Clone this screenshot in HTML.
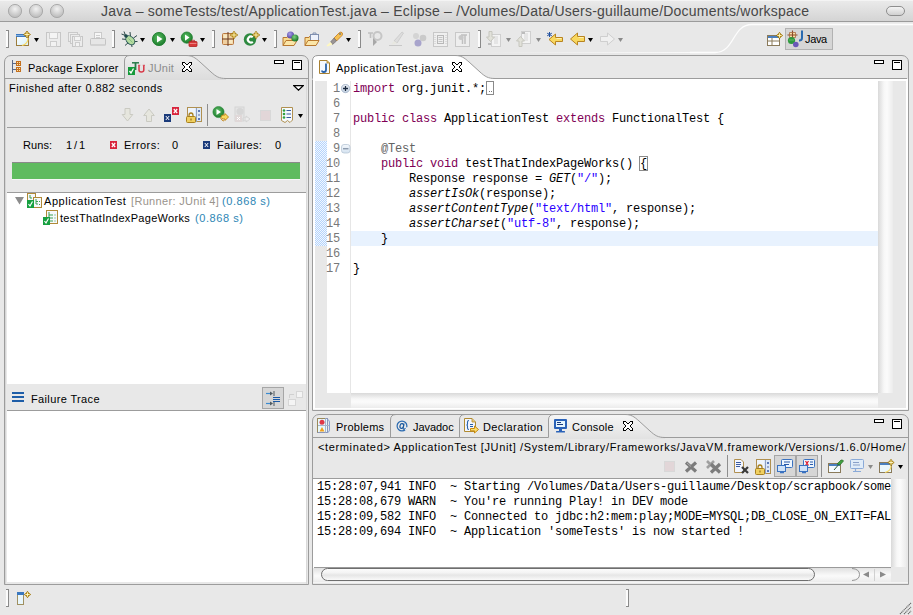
<!DOCTYPE html>
<html><head><meta charset="utf-8"><style>
html,body{margin:0;padding:0;width:913px;height:615px;overflow:hidden;background:#e8e8e8}
.t{position:absolute;white-space:nowrap;line-height:normal}
.b{position:absolute;display:block}
</style></head><body>
<div class="b" style="left:0px;top:0px;width:913px;height:21px;background:linear-gradient(#ebebeb,#d4d4d4)"></div>
<div class="b" style="left:0px;top:0px;width:913px;height:1px;background:#f4f4f4"></div>
<div class="b" style="left:0px;top:21px;width:913px;height:1px;background:#9b9b9b"></div>
<svg class="b" style="left:7px;top:3px" width="16" height="16" viewBox="0 0 16 16"><defs><radialGradient id="tl" cx="50%" cy="35%" r="60%"><stop offset="0" stop-color="#f2f2f2"/><stop offset="1" stop-color="#bdbdbd"/></radialGradient></defs><circle cx="8" cy="8" r="6.6" fill="url(#tl)" stroke="#a6a6a6" stroke-width="0.9"/></svg>
<svg class="b" style="left:28px;top:3px" width="16" height="16" viewBox="0 0 16 16"><defs><radialGradient id="tl" cx="50%" cy="35%" r="60%"><stop offset="0" stop-color="#f2f2f2"/><stop offset="1" stop-color="#bdbdbd"/></radialGradient></defs><circle cx="8" cy="8" r="6.6" fill="url(#tl)" stroke="#a6a6a6" stroke-width="0.9"/></svg>
<svg class="b" style="left:49px;top:3px" width="16" height="16" viewBox="0 0 16 16"><defs><radialGradient id="tl" cx="50%" cy="35%" r="60%"><stop offset="0" stop-color="#f2f2f2"/><stop offset="1" stop-color="#bdbdbd"/></radialGradient></defs><circle cx="8" cy="8" r="6.6" fill="url(#tl)" stroke="#a6a6a6" stroke-width="0.9"/></svg>
<span id="title" class="t" style="left:101px;top:3px;font-size:14px;color:#474747;letter-spacing:0.234px;font-family:'Liberation Sans', sans-serif;font-weight:normal;font-style:normal;">Java – someTests/test/ApplicationTest.java – Eclipse – /Volumes/Data/Users-guillaume/Documents/workspace</span>
<div class="b" style="left:886px;top:6px;width:19px;height:10px;border:1px solid #8e8e8e;border-radius:6px;background:linear-gradient(#f4f4f4,#d0d0d0);box-sizing:border-box"></div>
<div class="b" style="left:0px;top:22px;width:913px;height:593px;background:#e8e8e8"></div>
<svg class="b" style="left:6px;top:30px" width="3" height="18" viewBox="0 0 3 18"><rect x="0" y="0.5" width="2" height="17" fill="#fcfcfc"/><path d="M2.5,0V18M0,0.5H2.5M0,17.5H2.5" stroke="#8a8a8a"/></svg>
<svg class="b" style="left:112px;top:30px" width="3" height="18" viewBox="0 0 3 18"><rect x="0" y="0.5" width="2" height="17" fill="#fcfcfc"/><path d="M2.5,0V18M0,0.5H2.5M0,17.5H2.5" stroke="#8a8a8a"/></svg>
<svg class="b" style="left:212px;top:30px" width="3" height="18" viewBox="0 0 3 18"><rect x="0" y="0.5" width="2" height="17" fill="#fcfcfc"/><path d="M2.5,0V18M0,0.5H2.5M0,17.5H2.5" stroke="#8a8a8a"/></svg>
<svg class="b" style="left:274px;top:30px" width="3" height="18" viewBox="0 0 3 18"><rect x="0" y="0.5" width="2" height="17" fill="#fcfcfc"/><path d="M2.5,0V18M0,0.5H2.5M0,17.5H2.5" stroke="#8a8a8a"/></svg>
<svg class="b" style="left:358px;top:30px" width="3" height="18" viewBox="0 0 3 18"><rect x="0" y="0.5" width="2" height="17" fill="#fcfcfc"/><path d="M2.5,0V18M0,0.5H2.5M0,17.5H2.5" stroke="#8a8a8a"/></svg>
<svg class="b" style="left:478px;top:30px" width="3" height="18" viewBox="0 0 3 18"><rect x="0" y="0.5" width="2" height="17" fill="#fcfcfc"/><path d="M2.5,0V18M0,0.5H2.5M0,17.5H2.5" stroke="#8a8a8a"/></svg>
<svg class="b" style="left:15px;top:31px" width="17" height="16" viewBox="0 0 17 16"><defs><linearGradient id="nwb" x1="0" y1="0" x2="1" y2="1"><stop offset="0" stop-color="#ffffff"/><stop offset="1" stop-color="#d6f0fb"/></linearGradient></defs><rect x="1.5" y="3.5" width="12" height="11" fill="url(#nwb)" stroke="#9c7c3c"/><rect x="1" y="3" width="10" height="3" fill="#3c78c0"/><rect x="1" y="4" width="10" height="1" fill="#80b0e0"/><path d="M13,7 Q13,13 7,14.5" fill="none" stroke="#f8d860" stroke-width="1.2"/><path d="M12,0.0 Q13.120000000000001,2.38 15.5,3.5 Q13.120000000000001,4.62 12,7.0 Q10.879999999999999,4.62 8.5,3.5 Q10.879999999999999,2.38 12,0.0Z" fill="#b88a08" stroke="#9a7000" stroke-width="0.7"/><path d="M12,1.0V6.0M9.5,3.5H14.5" stroke="#fff8c8" stroke-width="0.9"/></svg>
<svg class="b" style="left:34px;top:38px" width="5" height="4" viewBox="0 0 5 4"><path d="M0,0H5L2.5,4Z" fill="#000"/></svg>
<svg class="b" style="left:46px;top:32px" width="15" height="15" viewBox="0 0 15 15"><rect x="0.5" y="0.5" width="14" height="14" fill="#ececec" stroke="#c6c6c6"/><rect x="3.5" y="0.5" width="8" height="6" fill="#f4f4f4" stroke="#cfcfcf"/><rect x="4.5" y="9.5" width="6" height="5" fill="#f2f2f2" stroke="#cdcdcd"/></svg>
<svg class="b" style="left:68px;top:32px" width="15" height="15" viewBox="0 0 15 15"><rect x="0.5" y="0.5" width="9" height="9" fill="#ececec" stroke="#cacaca"/><rect x="2.5" y="2.5" width="9" height="9" fill="#ececec" stroke="#cacaca"/><rect x="4.5" y="4.5" width="10" height="10" fill="#ececec" stroke="#c6c6c6"/><rect x="6.5" y="4.5" width="6" height="4" fill="#f4f4f4" stroke="#cfcfcf"/><rect x="7.5" y="10.5" width="4" height="4" fill="#f2f2f2" stroke="#cdcdcd"/></svg>
<svg class="b" style="left:90px;top:32px" width="16" height="15" viewBox="0 0 16 15"><rect x="4.5" y="0.5" width="7" height="8" fill="#f6f6f6" stroke="#cacaca"/><path d="M6,3.5H10M6,5.5H10" stroke="#cfcfcf"/><rect x="0.5" y="6.5" width="15" height="7" rx="1" fill="#e6e6e6" stroke="#c4c4c4"/><rect x="1" y="12" width="14" height="2" fill="#d2d2d2"/></svg>
<svg class="b" style="left:121px;top:31px" width="17" height="16" viewBox="0 0 17 16"><g stroke="#1a3838" stroke-width="0.9" fill="none"><path d="M4.5,4.5L3,0.5M4.5,4.5L0.5,3"/><path d="M6,8.5L1,8M8,11L4,14.5M9.5,5.5L9,1M12.5,7L16,4.5M12.5,10.5L16.5,10.5M10.5,13L11,16"/></g><ellipse cx="9.3" cy="9.3" rx="3.6" ry="5.2" transform="rotate(-45 9.3 9.3)" fill="#b4dca0" stroke="#2a5858" stroke-width="1"/><path d="M7.5,7.5L11.5,11.5" stroke="#78b078" stroke-width="0.7"/><circle cx="5" cy="5" r="1.8" fill="#1e4a4a"/></svg>
<svg class="b" style="left:140px;top:38px" width="5" height="4" viewBox="0 0 5 4"><path d="M0,0H5L2.5,4Z" fill="#000"/></svg>
<svg class="b" style="left:151px;top:31px" width="16" height="16" viewBox="0 0 16 16"><defs><radialGradient id="rg" cx="45%" cy="40%" r="60%"><stop offset="0" stop-color="#58c060"/><stop offset="1" stop-color="#1c7a2c"/></radialGradient></defs><circle cx="8" cy="8" r="6.6" fill="url(#rg)" stroke="#208030" stroke-width="0.9"/><path d="M6,4.5L11.5,8L6,11.5Z" fill="#fff"/></svg>
<svg class="b" style="left:170px;top:38px" width="5" height="4" viewBox="0 0 5 4"><path d="M0,0H5L2.5,4Z" fill="#000"/></svg>
<svg class="b" style="left:180px;top:31px" width="18" height="16" viewBox="0 0 18 16"><defs><radialGradient id="rg2" cx="45%" cy="40%" r="60%"><stop offset="0" stop-color="#58c060"/><stop offset="1" stop-color="#1c7a2c"/></radialGradient></defs><circle cx="6.8" cy="6.6" r="5.6" fill="url(#rg2)" stroke="#208030" stroke-width="0.8"/><path d="M5,3.5L9.5,6.6L5,9.7Z" fill="#fff"/><rect x="9" y="10.5" width="8" height="5" rx="0.8" fill="#d83a3a" stroke="#b02020" stroke-width="0.8"/><path d="M11.5,10.5V9.3H14.5V10.5" fill="none" stroke="#b02020" stroke-width="0.8"/><path d="M9.5,12.5H16.5" stroke="#f0a0a0" stroke-width="0.7"/></svg>
<svg class="b" style="left:200px;top:38px" width="5" height="4" viewBox="0 0 5 4"><path d="M0,0H5L2.5,4Z" fill="#000"/></svg>
<svg class="b" style="left:222px;top:31px" width="16" height="15" viewBox="0 0 16 15"><rect x="0.5" y="2.5" width="11" height="11" rx="1" fill="#f0d0a0" stroke="#b87840"/><rect x="1.5" y="3.5" width="4" height="4" fill="#f8e8c0"/><rect x="6.5" y="8.5" width="4" height="4" fill="#f8e8c0"/><path d="M6,1V15M0,8H12" stroke="#6a3a20" stroke-width="1"/><path d="M12,0.20000000000000018 Q13.216,2.784 15.8,4 Q13.216,5.216 12,7.8 Q10.784,5.216 8.2,4 Q10.784,2.784 12,0.20000000000000018Z" fill="#b88a08" stroke="#9a7000" stroke-width="0.7"/><path d="M12,1.2000000000000002V6.8M9.2,4H14.8" stroke="#fff8c8" stroke-width="0.9"/></svg>
<svg class="b" style="left:243px;top:31px" width="17" height="15" viewBox="0 0 17 15"><circle cx="7" cy="8.5" r="6.2" fill="#2e8a40"/><path d="M9.8,6.2 A3,3 0 1 0 9.8,10.8" fill="none" stroke="#fff" stroke-width="2.2"/><path d="M13,0.20000000000000018 Q14.216,2.784 16.8,4 Q14.216,5.216 13,7.8 Q11.784,5.216 9.2,4 Q11.784,2.784 13,0.20000000000000018Z" fill="#b88a08" stroke="#9a7000" stroke-width="0.7"/><path d="M13,1.2000000000000002V6.8M10.2,4H15.8" stroke="#fff8c8" stroke-width="0.9"/></svg>
<svg class="b" style="left:262px;top:38px" width="5" height="4" viewBox="0 0 5 4"><path d="M0,0H5L2.5,4Z" fill="#000"/></svg>
<svg class="b" style="left:282px;top:31px" width="18" height="16" viewBox="0 0 18 16"><defs><radialGradient id="ps" cx="40%" cy="35%" r="60%"><stop offset="0" stop-color="#a8a0e8"/><stop offset="1" stop-color="#5a4aa8"/></radialGradient><radialGradient id="gs" cx="40%" cy="35%" r="60%"><stop offset="0" stop-color="#80d080"/><stop offset="1" stop-color="#1e7a2e"/></radialGradient></defs><path d="M1,6.5H5L6,5H10V14.5H1Z" fill="#f8dc90" stroke="#b87830"/><path d="M1,14.5L4,9.5H15L12,14.5Z" fill="#fbe6a8" stroke="#b87830"/><circle cx="8.5" cy="4" r="3.5" fill="url(#ps)"/><circle cx="13" cy="7" r="3.5" fill="url(#gs)"/></svg>
<svg class="b" style="left:304px;top:31px" width="17" height="16" viewBox="0 0 17 16"><path d="M1,6.5H5L6,5H10V14.5H1Z" fill="#f8dc90" stroke="#b87830"/><rect x="6.5" y="3.5" width="8" height="6" fill="#eef2fb" stroke="#8090b0"/><path d="M9,3.5V2H12V3.5" fill="none" stroke="#8090b0"/><path d="M1,14.5L4,9.5H15L12,14.5Z" fill="#fbe6a8" stroke="#b87830"/></svg>
<svg class="b" style="left:326px;top:31px" width="18" height="16" viewBox="0 0 18 16"><path d="M8,7L13.5,1.5Q15,0.5 16.2,1.8Q17,3 16,4.5L10.5,10Z" fill="#f6c050" stroke="#c07820" stroke-width="0.8"/><path d="M8,7L10.5,10L6.5,13.5L4.5,11Z" fill="#9a9494" stroke="#6a6464" stroke-width="0.6"/><path d="M4.5,11L6.5,13.5L1.5,15.5L0.5,14.5Z" fill="#fff8c0"/><circle cx="14" cy="3" r="0.8" fill="#2050a0"/></svg>
<svg class="b" style="left:346px;top:38px" width="5" height="4" viewBox="0 0 5 4"><path d="M0,0H5L2.5,4Z" fill="#000"/></svg>
<svg class="b" style="left:367px;top:31px" width="17" height="16" viewBox="0 0 17 16"><path d="M1,2H6M3.5,2V7" stroke="#c0c0c0" stroke-width="1.6"/><circle cx="10.5" cy="5" r="4" fill="none" stroke="#c6c6c6" stroke-width="2"/><path d="M6,7L6,15L10,11Z" fill="#a8a8a8"/></svg>
<svg class="b" style="left:388px;top:31px" width="17" height="16" viewBox="0 0 17 16"><path d="M6,10L14,1L15.5,2L9,12Z" fill="#dedede" stroke="#c4c4c4" stroke-width="0.7"/><path d="M1,14.5H14" stroke="#c8c8c8"/><path d="M3,14L6,10L9,12Z" fill="#e8e8e0"/></svg>
<svg class="b" style="left:412px;top:32px" width="15" height="15" viewBox="0 0 15 15"><circle cx="4" cy="4" r="3" fill="#d4d4d4"/><circle cx="11" cy="6" r="3.3" fill="#cacaca"/><circle cx="6" cy="11" r="3.5" fill="#a8a4cc"/></svg>
<svg class="b" style="left:433px;top:32px" width="16" height="15" viewBox="0 0 16 15"><rect x="0.5" y="0.5" width="14" height="14" fill="#efefef" stroke="#c8c8c8"/><rect x="4.5" y="3.5" width="6" height="8" fill="none" stroke="#b8b8b8"/><path d="M5.5,5.5H9.5M5.5,7.5H9.5M5.5,9.5H9.5" stroke="#c4c4c4"/><path d="M2,3V12M13,3V12" stroke="#c8c8c8" stroke-dasharray="1 1"/></svg>
<svg class="b" style="left:455px;top:32px" width="16" height="15" viewBox="0 0 16 15"><rect x="0.5" y="0.5" width="14" height="14" fill="#eeeeee" stroke="#c8c8c8"/><path d="M6,3H12M7.5,3V12M10,3V12" stroke="#c0c0c0" stroke-width="1.5"/><circle cx="6" cy="5.5" r="2.5" fill="#c8c8c8"/></svg>
<svg class="b" style="left:486px;top:31px" width="16" height="16" viewBox="0 0 16 16"><rect x="5.5" y="3.5" width="9" height="12" fill="#f4f4f4" stroke="#cfcfcf"/><path d="M8,6H12M8,8H12M8,10H12M8,12H12" stroke="#d6d6d6"/><path d="M3,0.5H6V6H8.5L4.5,10.5L0.5,6H3Z" fill="#e2e2da" stroke="#c6c6be"/><rect x="2" y="12" width="3" height="2" fill="#bcbcbc"/></svg>
<svg class="b" style="left:506px;top:38px" width="5" height="4" viewBox="0 0 5 4"><path d="M0,0H5L2.5,4Z" fill="#8a8a8a"/></svg>
<svg class="b" style="left:516px;top:31px" width="16" height="16" viewBox="0 0 16 16"><rect x="5.5" y="0.5" width="9" height="12" fill="#f4f4f4" stroke="#cfcfcf"/><path d="M8,3H12M8,5H12M8,7H12M8,9H12" stroke="#d6d6d6"/><path d="M3,15.5H6V10H8.5L4.5,5.5L0.5,10H3Z" fill="#e2e2da" stroke="#c6c6be"/><rect x="6" y="1" width="3" height="2" fill="#bcbcbc"/></svg>
<svg class="b" style="left:536px;top:38px" width="5" height="4" viewBox="0 0 5 4"><path d="M0,0H5L2.5,4Z" fill="#8a8a8a"/></svg>
<svg class="b" style="left:546px;top:31px" width="18" height="15" viewBox="0 0 18 15"><path d="M16.5,6.5H9.5V3L3,8.5L9.5,14V10.5H16.5Z" fill="#f8d860" stroke="#b88420" stroke-width="1"/><path d="M10.5,7.5H15.5" stroke="#fff0b0"/><path d="M3.5,1V6M1.2,2.2L5.8,4.8M1.2,4.8L5.8,2.2" stroke="#2050a0" stroke-width="1"/></svg>
<svg class="b" style="left:569px;top:31px" width="16" height="15" viewBox="0 0 16 15"><path d="M15.5,5.5H8.5V2L1.5,8L8.5,14V10.5H15.5Z" fill="#f8d860" stroke="#b88420" stroke-width="1"/><path d="M9.5,6.5H14.5" stroke="#fff0b0"/></svg>
<svg class="b" style="left:588px;top:38px" width="5" height="4" viewBox="0 0 5 4"><path d="M0,0H5L2.5,4Z" fill="#000"/></svg>
<svg class="b" style="left:600px;top:31px" width="16" height="15" viewBox="0 0 16 15"><path d="M0.5,5.5H7.5V2L14.5,8L7.5,14V10.5H0.5Z" fill="#f0f0f0" stroke="#cfcfcf" stroke-width="1"/></svg>
<svg class="b" style="left:618px;top:38px" width="5" height="4" viewBox="0 0 5 4"><path d="M0,0H5L2.5,4Z" fill="#8a8a8a"/></svg>
<div class="b" style="left:480px;top:52px;width:230px;height:1px;background:linear-gradient(90deg,rgba(255,255,255,0),#fbfbfb)"></div>
<svg class="b" style="left:690px;top:20px" width="223" height="36" viewBox="0 0 223 36"><path d="M0,32.5 L25,32.5 C45,32.5 42,4.5 62,4.5 L223,4.5" fill="none" stroke="#fdfdfd" stroke-width="1.3"/></svg>
<svg class="b" style="left:767px;top:32px" width="16" height="15" viewBox="0 0 16 15"><rect x="0.5" y="3.5" width="12" height="10" fill="#fff" stroke="#8a7a5a"/><rect x="1" y="4" width="11" height="2" fill="#4a80c0"/><path d="M5,6V13M1,9H12" stroke="#8a7a5a"/><path d="M12.5,0.2999999999999998 Q13.524000000000001,2.476 15.7,3.5 Q13.524000000000001,4.524 12.5,6.7 Q11.475999999999999,4.524 9.3,3.5 Q11.475999999999999,2.476 12.5,0.2999999999999998Z" fill="#b88a08" stroke="#9a7000" stroke-width="0.7"/><path d="M12.5,1.2999999999999998V5.7M10.3,3.5H14.7" stroke="#fff8c8" stroke-width="0.9"/></svg>
<div class="b" style="left:785px;top:28px;width:48px;height:22px;box-sizing:border-box;border:1px solid #b2b2b2;background:#d6d6d6"></div>
<svg class="b" style="left:787px;top:30px" width="18" height="18" viewBox="0 0 18 18"><rect x="2.5" y="2.5" width="6" height="5" fill="#f8e0a8"/><path d="M5.5,0.5V10M0.5,5H10.5" stroke="#8a4a28" stroke-width="1.1"/><path d="M2.5,2.5H8.5V7.5H2.5Z" fill="none" stroke="#a86a40" stroke-width="0.8"/><circle cx="4.5" cy="10.5" r="3.6" fill="#2e9a3e"/><path d="M2,10H7" stroke="#70c070" stroke-width="0.8"/><circle cx="8.8" cy="14.5" r="2.8" fill="#6a58b8"/><path d="M15,0.5V8Q15,10.5 12,10.5" stroke="#2a6ab0" stroke-width="2" fill="none"/></svg>
<span id="javap" class="t" style="left:805px;top:33px;font-size:11px;color:#000;letter-spacing:-0.366px;font-family:'Liberation Sans', sans-serif;font-weight:normal;font-style:normal;">Java</span>
<div class="b" style="left:4px;top:55px;width:305px;height:530px;box-sizing:border-box;border:1px solid #9c9c9c;border-radius:7px 7px 0 0;background:#e8e8e8"></div>
<div class="b" style="left:5px;top:79px;width:1px;height:505px;background:#d6d6d6"></div>
<div class="b" style="left:306px;top:79px;width:1px;height:505px;background:#d9d9d9"></div>
<div class="b" style="left:5px;top:78px;width:120px;height:1px;background:#9c9c9c"></div>
<div class="b" style="left:226px;top:78px;width:82px;height:1px;background:#9c9c9c"></div>
<svg class="b" style="left:124px;top:55px" width="103" height="25" viewBox="0 0 103 25"><defs><linearGradient id="jt" x1="0" y1="0" x2="0" y2="1"><stop offset="0" stop-color="#ededed"/><stop offset="1" stop-color="#dcdcdc"/></linearGradient></defs><path d="M0.5,23.5 L0.5,6 Q0.5,0.5 6,0.5 L62,0.5 C68,0.5 71,2.5 76,7 L87,17 C92,21.5 95,23.5 102,23.5 L102,25 L0.5,25 Z" fill="url(#jt)"/><path d="M0.5,23.5 L0.5,6 Q0.5,0.5 6,0.5 L62,0.5 C68,0.5 71,2.5 76,7 L87,17 C92,21.5 95,23.5 102,23.5 L103,23.5" fill="none" stroke="#9c9c9c"/></svg>
<svg class="b" style="left:182px;top:62px" width="10" height="10" viewBox="0 0 10 10"><g shape-rendering="crispEdges"><rect x="0" y="0" width="1" height="1" fill="#000"/><rect x="1" y="0" width="1" height="1" fill="#000"/><rect x="2" y="0" width="1" height="1" fill="#000"/><rect x="7" y="0" width="1" height="1" fill="#000"/><rect x="8" y="0" width="1" height="1" fill="#000"/><rect x="9" y="0" width="1" height="1" fill="#000"/><rect x="0" y="1" width="1" height="1" fill="#000"/><rect x="1" y="1" width="1" height="1" fill="#fff"/><rect x="2" y="1" width="1" height="1" fill="#fff"/><rect x="3" y="1" width="1" height="1" fill="#000"/><rect x="6" y="1" width="1" height="1" fill="#000"/><rect x="7" y="1" width="1" height="1" fill="#fff"/><rect x="8" y="1" width="1" height="1" fill="#fff"/><rect x="9" y="1" width="1" height="1" fill="#000"/><rect x="0" y="2" width="1" height="1" fill="#000"/><rect x="1" y="2" width="1" height="1" fill="#fff"/><rect x="2" y="2" width="1" height="1" fill="#fff"/><rect x="3" y="2" width="1" height="1" fill="#fff"/><rect x="4" y="2" width="1" height="1" fill="#000"/><rect x="5" y="2" width="1" height="1" fill="#000"/><rect x="6" y="2" width="1" height="1" fill="#fff"/><rect x="7" y="2" width="1" height="1" fill="#fff"/><rect x="8" y="2" width="1" height="1" fill="#fff"/><rect x="9" y="2" width="1" height="1" fill="#000"/><rect x="1" y="3" width="1" height="1" fill="#000"/><rect x="2" y="3" width="1" height="1" fill="#fff"/><rect x="3" y="3" width="1" height="1" fill="#fff"/><rect x="4" y="3" width="1" height="1" fill="#fff"/><rect x="5" y="3" width="1" height="1" fill="#fff"/><rect x="6" y="3" width="1" height="1" fill="#fff"/><rect x="7" y="3" width="1" height="1" fill="#fff"/><rect x="8" y="3" width="1" height="1" fill="#000"/><rect x="2" y="4" width="1" height="1" fill="#000"/><rect x="3" y="4" width="1" height="1" fill="#fff"/><rect x="4" y="4" width="1" height="1" fill="#fff"/><rect x="5" y="4" width="1" height="1" fill="#fff"/><rect x="6" y="4" width="1" height="1" fill="#fff"/><rect x="7" y="4" width="1" height="1" fill="#000"/><rect x="2" y="5" width="1" height="1" fill="#000"/><rect x="3" y="5" width="1" height="1" fill="#fff"/><rect x="4" y="5" width="1" height="1" fill="#fff"/><rect x="5" y="5" width="1" height="1" fill="#fff"/><rect x="6" y="5" width="1" height="1" fill="#fff"/><rect x="7" y="5" width="1" height="1" fill="#000"/><rect x="1" y="6" width="1" height="1" fill="#000"/><rect x="2" y="6" width="1" height="1" fill="#fff"/><rect x="3" y="6" width="1" height="1" fill="#fff"/><rect x="4" y="6" width="1" height="1" fill="#fff"/><rect x="5" y="6" width="1" height="1" fill="#fff"/><rect x="6" y="6" width="1" height="1" fill="#fff"/><rect x="7" y="6" width="1" height="1" fill="#fff"/><rect x="8" y="6" width="1" height="1" fill="#000"/><rect x="0" y="7" width="1" height="1" fill="#000"/><rect x="1" y="7" width="1" height="1" fill="#fff"/><rect x="2" y="7" width="1" height="1" fill="#fff"/><rect x="3" y="7" width="1" height="1" fill="#fff"/><rect x="4" y="7" width="1" height="1" fill="#000"/><rect x="5" y="7" width="1" height="1" fill="#000"/><rect x="6" y="7" width="1" height="1" fill="#fff"/><rect x="7" y="7" width="1" height="1" fill="#fff"/><rect x="8" y="7" width="1" height="1" fill="#fff"/><rect x="9" y="7" width="1" height="1" fill="#000"/><rect x="0" y="8" width="1" height="1" fill="#000"/><rect x="1" y="8" width="1" height="1" fill="#fff"/><rect x="2" y="8" width="1" height="1" fill="#fff"/><rect x="3" y="8" width="1" height="1" fill="#000"/><rect x="6" y="8" width="1" height="1" fill="#000"/><rect x="7" y="8" width="1" height="1" fill="#fff"/><rect x="8" y="8" width="1" height="1" fill="#fff"/><rect x="9" y="8" width="1" height="1" fill="#000"/><rect x="0" y="9" width="1" height="1" fill="#000"/><rect x="1" y="9" width="1" height="1" fill="#000"/><rect x="2" y="9" width="1" height="1" fill="#000"/><rect x="7" y="9" width="1" height="1" fill="#000"/><rect x="8" y="9" width="1" height="1" fill="#000"/><rect x="9" y="9" width="1" height="1" fill="#000"/></g></svg>
<span id="pe" class="t" style="left:28px;top:62px;font-size:11px;color:#000;letter-spacing:0.247px;font-family:'Liberation Sans', sans-serif;font-weight:normal;font-style:normal;">Package Explorer</span>
<span id="ju" class="t" style="left:148px;top:62px;font-size:11px;color:#8c8c8c;letter-spacing:0.2px;font-family:'Liberation Sans', sans-serif;font-weight:normal;font-style:normal;">JUnit</span>
<div class="b" style="left:274px;top:60px;width:10px;height:4px;box-sizing:border-box;border:1px solid #000;background:#fff"></div>
<div class="b" style="left:292px;top:60px;width:10px;height:10px;box-sizing:border-box;border:1px solid #000;background:#fff"></div>
<div class="b" style="left:294px;top:62px;width:6px;height:1px;background:#000"></div>
<svg class="b" style="left:293px;top:85px" width="11" height="6" viewBox="0 0 11 6"><path d="M0.8,0.6H10.2L5.5,5.2Z" fill="#fff" stroke="#000" stroke-width="1.2" stroke-linejoin="miter"/></svg>
<span id="fin" class="t" style="left:9px;top:82px;font-size:11px;color:#000;letter-spacing:0.447px;font-family:'Liberation Sans', sans-serif;font-weight:normal;font-style:normal;">Finished after 0.882 seconds</span>
<div class="b" style="left:7px;top:127px;width:299px;height:1px;background:#a0a0a0"></div>
<span id="runs" class="t" style="left:23px;top:139px;font-size:11px;color:#000;letter-spacing:0.075px;font-family:'Liberation Sans', sans-serif;font-weight:normal;font-style:normal;">Runs:</span>
<span id="r11" class="t" style="left:66px;top:139px;font-size:11px;color:#000;letter-spacing:1.95px;font-family:'Liberation Sans', sans-serif;font-weight:normal;font-style:normal;">1/1</span>
<span id="err" class="t" style="left:124px;top:139px;font-size:11px;color:#000;letter-spacing:0.447px;font-family:'Liberation Sans', sans-serif;font-weight:normal;font-style:normal;">Errors:</span>
<span class="t" style="left:172px;top:139px;font-size:11px;color:#000;letter-spacing:0.45px;font-family:'Liberation Sans', sans-serif;font-weight:normal;font-style:normal;">0</span>
<span id="fail" class="t" style="left:217px;top:139px;font-size:11px;color:#000;letter-spacing:0.325px;font-family:'Liberation Sans', sans-serif;font-weight:normal;font-style:normal;">Failures:</span>
<span class="t" style="left:275px;top:139px;font-size:11px;color:#000;letter-spacing:0.45px;font-family:'Liberation Sans', sans-serif;font-weight:normal;font-style:normal;">0</span>
<div class="b" style="left:12px;top:162px;width:288px;height:17px;background:#5fbb5f;border-top:1px solid #8a8a8a;box-sizing:border-box"></div>
<div class="b" style="left:12px;top:179px;width:288px;height:1px;background:#f6f6f6"></div>
<div class="b" style="left:7px;top:192px;width:299px;height:1px;background:#9c9c9c"></div>
<div class="b" style="left:7px;top:193px;width:299px;height:191px;background:#fff"></div>
<span id="apt" class="t" style="left:44px;top:195px;font-size:11px;color:#000;letter-spacing:0.557px;font-family:'Liberation Sans', sans-serif;font-weight:normal;font-style:normal;">ApplicationTest</span>
<span id="runner" class="t" style="left:131px;top:195px;font-size:11px;color:#9a948c;letter-spacing:0.328px;font-family:'Liberation Sans', sans-serif;font-weight:normal;font-style:normal;">[Runner: JUnit 4]</span>
<span id="t1" class="t" style="left:222px;top:195px;font-size:11px;color:#2d86b5;letter-spacing:0.575px;font-family:'Liberation Sans', sans-serif;font-weight:normal;font-style:normal;">(0.868 s)</span>
<span id="tt" class="t" style="left:60px;top:212px;font-size:11px;color:#000;letter-spacing:0.307px;font-family:'Liberation Sans', sans-serif;font-weight:normal;font-style:normal;">testThatIndexPageWorks</span>
<span id="t2" class="t" style="left:195px;top:212px;font-size:11px;color:#2d86b5;letter-spacing:0.575px;font-family:'Liberation Sans', sans-serif;font-weight:normal;font-style:normal;">(0.868 s)</span>
<div class="b" style="left:7px;top:384px;width:299px;height:26px;background:#e8e8e8"></div>
<div class="b" style="left:7px;top:410px;width:299px;height:1px;background:#9c9c9c"></div>
<div class="b" style="left:7px;top:411px;width:299px;height:171px;background:#fff"></div>
<span id="ft" class="t" style="left:31px;top:393px;font-size:11px;color:#000;letter-spacing:0.364px;font-family:'Liberation Sans', sans-serif;font-weight:normal;font-style:normal;">Failure Trace</span>
<div class="b" style="left:312px;top:55px;width:597px;height:356px;box-sizing:border-box;border:1px solid #9c9c9c;border-radius:7px 7px 0 0;background:#e8e8e8"></div>
<div class="b" style="left:313px;top:78px;width:0px;height:0px;"></div>
<div class="b" style="left:313px;top:78px;width:594px;height:1px;background:#9c9c9c"></div>
<svg class="b" style="left:312px;top:55px" width="184" height="25" viewBox="0 0 184 25"><path d="M0.5,23.5 L0.5,6 Q0.5,0.5 6,0.5 L143,0.5 C149,0.5 152,2.5 157,7 L168,17 C173,21.5 176,23.5 183,23.5 L183,25 L0.5,25 Z" fill="#fff"/><path d="M0.5,23.5 L0.5,6 Q0.5,0.5 6,0.5 L143,0.5 C149,0.5 152,2.5 157,7 L168,17 C173,21.5 176,23.5 183,23.5 L184,23.5" fill="none" stroke="#9c9c9c"/></svg>
<svg class="b" style="left:452px;top:62px" width="10" height="10" viewBox="0 0 10 10"><g shape-rendering="crispEdges"><rect x="0" y="0" width="1" height="1" fill="#000"/><rect x="1" y="0" width="1" height="1" fill="#000"/><rect x="2" y="0" width="1" height="1" fill="#000"/><rect x="7" y="0" width="1" height="1" fill="#000"/><rect x="8" y="0" width="1" height="1" fill="#000"/><rect x="9" y="0" width="1" height="1" fill="#000"/><rect x="0" y="1" width="1" height="1" fill="#000"/><rect x="1" y="1" width="1" height="1" fill="#fff"/><rect x="2" y="1" width="1" height="1" fill="#fff"/><rect x="3" y="1" width="1" height="1" fill="#000"/><rect x="6" y="1" width="1" height="1" fill="#000"/><rect x="7" y="1" width="1" height="1" fill="#fff"/><rect x="8" y="1" width="1" height="1" fill="#fff"/><rect x="9" y="1" width="1" height="1" fill="#000"/><rect x="0" y="2" width="1" height="1" fill="#000"/><rect x="1" y="2" width="1" height="1" fill="#fff"/><rect x="2" y="2" width="1" height="1" fill="#fff"/><rect x="3" y="2" width="1" height="1" fill="#fff"/><rect x="4" y="2" width="1" height="1" fill="#000"/><rect x="5" y="2" width="1" height="1" fill="#000"/><rect x="6" y="2" width="1" height="1" fill="#fff"/><rect x="7" y="2" width="1" height="1" fill="#fff"/><rect x="8" y="2" width="1" height="1" fill="#fff"/><rect x="9" y="2" width="1" height="1" fill="#000"/><rect x="1" y="3" width="1" height="1" fill="#000"/><rect x="2" y="3" width="1" height="1" fill="#fff"/><rect x="3" y="3" width="1" height="1" fill="#fff"/><rect x="4" y="3" width="1" height="1" fill="#fff"/><rect x="5" y="3" width="1" height="1" fill="#fff"/><rect x="6" y="3" width="1" height="1" fill="#fff"/><rect x="7" y="3" width="1" height="1" fill="#fff"/><rect x="8" y="3" width="1" height="1" fill="#000"/><rect x="2" y="4" width="1" height="1" fill="#000"/><rect x="3" y="4" width="1" height="1" fill="#fff"/><rect x="4" y="4" width="1" height="1" fill="#fff"/><rect x="5" y="4" width="1" height="1" fill="#fff"/><rect x="6" y="4" width="1" height="1" fill="#fff"/><rect x="7" y="4" width="1" height="1" fill="#000"/><rect x="2" y="5" width="1" height="1" fill="#000"/><rect x="3" y="5" width="1" height="1" fill="#fff"/><rect x="4" y="5" width="1" height="1" fill="#fff"/><rect x="5" y="5" width="1" height="1" fill="#fff"/><rect x="6" y="5" width="1" height="1" fill="#fff"/><rect x="7" y="5" width="1" height="1" fill="#000"/><rect x="1" y="6" width="1" height="1" fill="#000"/><rect x="2" y="6" width="1" height="1" fill="#fff"/><rect x="3" y="6" width="1" height="1" fill="#fff"/><rect x="4" y="6" width="1" height="1" fill="#fff"/><rect x="5" y="6" width="1" height="1" fill="#fff"/><rect x="6" y="6" width="1" height="1" fill="#fff"/><rect x="7" y="6" width="1" height="1" fill="#fff"/><rect x="8" y="6" width="1" height="1" fill="#000"/><rect x="0" y="7" width="1" height="1" fill="#000"/><rect x="1" y="7" width="1" height="1" fill="#fff"/><rect x="2" y="7" width="1" height="1" fill="#fff"/><rect x="3" y="7" width="1" height="1" fill="#fff"/><rect x="4" y="7" width="1" height="1" fill="#000"/><rect x="5" y="7" width="1" height="1" fill="#000"/><rect x="6" y="7" width="1" height="1" fill="#fff"/><rect x="7" y="7" width="1" height="1" fill="#fff"/><rect x="8" y="7" width="1" height="1" fill="#fff"/><rect x="9" y="7" width="1" height="1" fill="#000"/><rect x="0" y="8" width="1" height="1" fill="#000"/><rect x="1" y="8" width="1" height="1" fill="#fff"/><rect x="2" y="8" width="1" height="1" fill="#fff"/><rect x="3" y="8" width="1" height="1" fill="#000"/><rect x="6" y="8" width="1" height="1" fill="#000"/><rect x="7" y="8" width="1" height="1" fill="#fff"/><rect x="8" y="8" width="1" height="1" fill="#fff"/><rect x="9" y="8" width="1" height="1" fill="#000"/><rect x="0" y="9" width="1" height="1" fill="#000"/><rect x="1" y="9" width="1" height="1" fill="#000"/><rect x="2" y="9" width="1" height="1" fill="#000"/><rect x="7" y="9" width="1" height="1" fill="#000"/><rect x="8" y="9" width="1" height="1" fill="#000"/><rect x="9" y="9" width="1" height="1" fill="#000"/></g></svg>
<span id="edtab" class="t" style="left:336px;top:62px;font-size:11px;color:#000;letter-spacing:0.53px;font-family:'Liberation Sans', sans-serif;font-weight:normal;font-style:normal;">ApplicationTest.java</span>
<div class="b" style="left:874px;top:60px;width:10px;height:4px;box-sizing:border-box;border:1px solid #000;background:#fff"></div>
<div class="b" style="left:892px;top:60px;width:10px;height:10px;box-sizing:border-box;border:1px solid #000;background:#fff"></div>
<div class="b" style="left:894px;top:62px;width:6px;height:1px;background:#000"></div>
<div class="b" style="left:313px;top:79px;width:595px;height:331px;background:#fff"></div>
<div class="b" style="left:315px;top:81px;width:12px;height:327px;background:#e8e8e8"></div>
<div class="b" style="left:350px;top:81px;width:1px;height:312px;background:#e6e6e6"></div>
<div class="b" style="left:315px;top:141px;width:12px;height:105px;background-color:#f2f7ff;background-image:repeating-conic-gradient(#b4d4fc 0 25%,#f2f7ff 0 50%);background-size:2px 2px"></div>
<div class="b" style="left:351px;top:231px;width:527px;height:15px;background:#e8f2fe"></div>
<span class="t" style="left:333px;top:82px;font-size:12px;color:#787878;letter-spacing:-0.2px;font-family:'Liberation Mono', monospace;font-weight:normal;font-style:normal;">1</span>
<span class="t" style="left:353px;top:82px;font-size:12px;color:#000;letter-spacing:-0.2px;font-family:'Liberation Mono', monospace;font-weight:normal;font-style:normal;white-space:pre"><span style="color:#7f0055">import</span> org.junit.*;</span>
<span class="t" style="left:333px;top:97px;font-size:12px;color:#787878;letter-spacing:-0.2px;font-family:'Liberation Mono', monospace;font-weight:normal;font-style:normal;">6</span>
<span class="t" style="left:333px;top:112px;font-size:12px;color:#787878;letter-spacing:-0.2px;font-family:'Liberation Mono', monospace;font-weight:normal;font-style:normal;">7</span>
<span class="t" style="left:353px;top:112px;font-size:12px;color:#000;letter-spacing:-0.2px;font-family:'Liberation Mono', monospace;font-weight:normal;font-style:normal;white-space:pre"><span style="color:#7f0055">public</span> <span style="color:#7f0055">class</span> ApplicationTest <span style="color:#7f0055">extends</span> FunctionalTest {</span>
<span class="t" style="left:333px;top:127px;font-size:12px;color:#787878;letter-spacing:-0.2px;font-family:'Liberation Mono', monospace;font-weight:normal;font-style:normal;">8</span>
<span class="t" style="left:333px;top:142px;font-size:12px;color:#787878;letter-spacing:-0.2px;font-family:'Liberation Mono', monospace;font-weight:normal;font-style:normal;">9</span>
<span class="t" style="left:353px;top:142px;font-size:12px;color:#000;letter-spacing:-0.2px;font-family:'Liberation Mono', monospace;font-weight:normal;font-style:normal;white-space:pre">    <span style="color:#646464">@Test</span></span>
<span class="t" style="left:326px;top:157px;font-size:12px;color:#787878;letter-spacing:-0.2px;font-family:'Liberation Mono', monospace;font-weight:normal;font-style:normal;">10</span>
<span class="t" style="left:353px;top:157px;font-size:12px;color:#000;letter-spacing:-0.2px;font-family:'Liberation Mono', monospace;font-weight:normal;font-style:normal;white-space:pre">    <span style="color:#7f0055">public</span> <span style="color:#7f0055">void</span> testThatIndexPageWorks() {</span>
<span class="t" style="left:326px;top:172px;font-size:12px;color:#787878;letter-spacing:-0.2px;font-family:'Liberation Mono', monospace;font-weight:normal;font-style:normal;">11</span>
<span class="t" style="left:353px;top:172px;font-size:12px;color:#000;letter-spacing:-0.2px;font-family:'Liberation Mono', monospace;font-weight:normal;font-style:normal;white-space:pre">        Response response = <i>GET</i>(<span style="color:#2a00ff">"/"</span>);</span>
<span class="t" style="left:326px;top:187px;font-size:12px;color:#787878;letter-spacing:-0.2px;font-family:'Liberation Mono', monospace;font-weight:normal;font-style:normal;">12</span>
<span class="t" style="left:353px;top:187px;font-size:12px;color:#000;letter-spacing:-0.2px;font-family:'Liberation Mono', monospace;font-weight:normal;font-style:normal;white-space:pre">        <i>assertIsOk</i>(response);</span>
<span class="t" style="left:326px;top:202px;font-size:12px;color:#787878;letter-spacing:-0.2px;font-family:'Liberation Mono', monospace;font-weight:normal;font-style:normal;">13</span>
<span class="t" style="left:353px;top:202px;font-size:12px;color:#000;letter-spacing:-0.2px;font-family:'Liberation Mono', monospace;font-weight:normal;font-style:normal;white-space:pre">        <i>assertContentType</i>(<span style="color:#2a00ff">"text/html"</span>, response);</span>
<span class="t" style="left:326px;top:217px;font-size:12px;color:#787878;letter-spacing:-0.2px;font-family:'Liberation Mono', monospace;font-weight:normal;font-style:normal;">14</span>
<span class="t" style="left:353px;top:217px;font-size:12px;color:#000;letter-spacing:-0.2px;font-family:'Liberation Mono', monospace;font-weight:normal;font-style:normal;white-space:pre">        <i>assertCharset</i>(<span style="color:#2a00ff">"utf-8"</span>, response);</span>
<span class="t" style="left:326px;top:232px;font-size:12px;color:#787878;letter-spacing:-0.2px;font-family:'Liberation Mono', monospace;font-weight:normal;font-style:normal;">15</span>
<span class="t" style="left:353px;top:232px;font-size:12px;color:#000;letter-spacing:-0.2px;font-family:'Liberation Mono', monospace;font-weight:normal;font-style:normal;white-space:pre">    }</span>
<span class="t" style="left:326px;top:247px;font-size:12px;color:#787878;letter-spacing:-0.2px;font-family:'Liberation Mono', monospace;font-weight:normal;font-style:normal;">16</span>
<span class="t" style="left:326px;top:262px;font-size:12px;color:#787878;letter-spacing:-0.2px;font-family:'Liberation Mono', monospace;font-weight:normal;font-style:normal;">17</span>
<span class="t" style="left:353px;top:262px;font-size:12px;color:#000;letter-spacing:-0.2px;font-family:'Liberation Mono', monospace;font-weight:normal;font-style:normal;white-space:pre">}</span>
<div class="b" style="left:486px;top:81px;width:8px;height:14px;box-sizing:border-box;border:1px solid #8a8a8a;background:#fff"></div>
<div class="b" style="left:489px;top:91px;width:1px;height:1px;background:#777"></div>
<div class="b" style="left:491px;top:91px;width:1px;height:1px;background:#777"></div>
<div class="b" style="left:639px;top:156px;width:9px;height:15px;box-sizing:border-box;border:1px solid #8a8a8a"></div>
<svg class="b" style="left:341px;top:84px" width="10" height="10" viewBox="0 0 10 10"><defs><radialGradient id="fg" cx="50%" cy="40%" r="60%"><stop offset="0" stop-color="#ffffff"/><stop offset="1" stop-color="#b8c8dc"/></radialGradient></defs><circle cx="4.5" cy="4.5" r="4.2" fill="url(#fg)" stroke="#9aaac0" stroke-width="0.6"/><path d="M2,4.5H7M4.5,2V7" stroke="#1a2a40" stroke-width="1.3"/></svg>
<svg class="b" style="left:341px;top:144px" width="10" height="10" viewBox="0 0 10 10"><defs><linearGradient id="fm" x1="0" y1="0" x2="0" y2="1"><stop offset="0" stop-color="#f4f8fc"/><stop offset="1" stop-color="#d4e2f0"/></linearGradient></defs><rect x="0.5" y="0.5" width="8.5" height="8.5" rx="2.5" fill="url(#fm)" stroke="#b8c6d6" stroke-width="0.8"/><path d="M2,4.8H7.5" stroke="#6a7a90" stroke-width="1"/></svg>
<div class="b" style="left:878px;top:81px;width:15px;height:312px;background:linear-gradient(90deg,#d9d9d9,#f7f7f7 40%,#fbfbfb 60%,#ececec)"></div>
<div class="b" style="left:893px;top:81px;width:13px;height:327px;background:#e8e8e8"></div>
<div class="b" style="left:351px;top:393px;width:527px;height:15px;background:linear-gradient(#d9d9d9,#f7f7f7 40%,#fbfbfb 60%,#ececec)"></div>
<div class="b" style="left:327px;top:393px;width:24px;height:15px;background:#e8e8e8"></div>
<div class="b" style="left:878px;top:393px;width:15px;height:15px;background:#e8e8e8"></div>
<div class="b" style="left:313px;top:409px;width:595px;height:1px;background:#f4f4f4"></div>
<div class="b" style="left:312px;top:414px;width:597px;height:171px;box-sizing:border-box;border:1px solid #9c9c9c;border-radius:7px 7px 0 0;background:#e8e8e8"></div>
<div class="b" style="left:313px;top:437px;width:595px;height:1px;background:#9c9c9c"></div>
<svg class="b" style="left:390px;top:414px" width="8" height="24" viewBox="0 0 8 24"><path d="M0.5,23 L0.5,6 Q0.5,0.5 6,0.5" fill="none" stroke="#9c9c9c"/></svg>
<svg class="b" style="left:459px;top:414px" width="8" height="24" viewBox="0 0 8 24"><path d="M0.5,23 L0.5,6 Q0.5,0.5 6,0.5" fill="none" stroke="#9c9c9c"/></svg>
<svg class="b" style="left:548px;top:414px" width="118" height="25" viewBox="0 0 118 25"><defs><linearGradient id="ct" x1="0" y1="0" x2="0" y2="1"><stop offset="0" stop-color="#f6f6f6"/><stop offset="1" stop-color="#e2e2e2"/></linearGradient></defs><path d="M0.5,23.5 L0.5,6 Q0.5,0.5 6,0.5 L77,0.5 C83,0.5 86,2.5 91,7 L102,17 C107,21.5 110,23.5 117,23.5 L117,25 L0.5,25 Z" fill="url(#ct)"/><path d="M0.5,23.5 L0.5,6 Q0.5,0.5 6,0.5 L77,0.5 C83,0.5 86,2.5 91,7 L102,17 C107,21.5 110,23.5 117,23.5 L118,23.5" fill="none" stroke="#9c9c9c"/></svg>
<svg class="b" style="left:623px;top:421px" width="10" height="10" viewBox="0 0 10 10"><g shape-rendering="crispEdges"><rect x="0" y="0" width="1" height="1" fill="#000"/><rect x="1" y="0" width="1" height="1" fill="#000"/><rect x="2" y="0" width="1" height="1" fill="#000"/><rect x="7" y="0" width="1" height="1" fill="#000"/><rect x="8" y="0" width="1" height="1" fill="#000"/><rect x="9" y="0" width="1" height="1" fill="#000"/><rect x="0" y="1" width="1" height="1" fill="#000"/><rect x="1" y="1" width="1" height="1" fill="#fff"/><rect x="2" y="1" width="1" height="1" fill="#fff"/><rect x="3" y="1" width="1" height="1" fill="#000"/><rect x="6" y="1" width="1" height="1" fill="#000"/><rect x="7" y="1" width="1" height="1" fill="#fff"/><rect x="8" y="1" width="1" height="1" fill="#fff"/><rect x="9" y="1" width="1" height="1" fill="#000"/><rect x="0" y="2" width="1" height="1" fill="#000"/><rect x="1" y="2" width="1" height="1" fill="#fff"/><rect x="2" y="2" width="1" height="1" fill="#fff"/><rect x="3" y="2" width="1" height="1" fill="#fff"/><rect x="4" y="2" width="1" height="1" fill="#000"/><rect x="5" y="2" width="1" height="1" fill="#000"/><rect x="6" y="2" width="1" height="1" fill="#fff"/><rect x="7" y="2" width="1" height="1" fill="#fff"/><rect x="8" y="2" width="1" height="1" fill="#fff"/><rect x="9" y="2" width="1" height="1" fill="#000"/><rect x="1" y="3" width="1" height="1" fill="#000"/><rect x="2" y="3" width="1" height="1" fill="#fff"/><rect x="3" y="3" width="1" height="1" fill="#fff"/><rect x="4" y="3" width="1" height="1" fill="#fff"/><rect x="5" y="3" width="1" height="1" fill="#fff"/><rect x="6" y="3" width="1" height="1" fill="#fff"/><rect x="7" y="3" width="1" height="1" fill="#fff"/><rect x="8" y="3" width="1" height="1" fill="#000"/><rect x="2" y="4" width="1" height="1" fill="#000"/><rect x="3" y="4" width="1" height="1" fill="#fff"/><rect x="4" y="4" width="1" height="1" fill="#fff"/><rect x="5" y="4" width="1" height="1" fill="#fff"/><rect x="6" y="4" width="1" height="1" fill="#fff"/><rect x="7" y="4" width="1" height="1" fill="#000"/><rect x="2" y="5" width="1" height="1" fill="#000"/><rect x="3" y="5" width="1" height="1" fill="#fff"/><rect x="4" y="5" width="1" height="1" fill="#fff"/><rect x="5" y="5" width="1" height="1" fill="#fff"/><rect x="6" y="5" width="1" height="1" fill="#fff"/><rect x="7" y="5" width="1" height="1" fill="#000"/><rect x="1" y="6" width="1" height="1" fill="#000"/><rect x="2" y="6" width="1" height="1" fill="#fff"/><rect x="3" y="6" width="1" height="1" fill="#fff"/><rect x="4" y="6" width="1" height="1" fill="#fff"/><rect x="5" y="6" width="1" height="1" fill="#fff"/><rect x="6" y="6" width="1" height="1" fill="#fff"/><rect x="7" y="6" width="1" height="1" fill="#fff"/><rect x="8" y="6" width="1" height="1" fill="#000"/><rect x="0" y="7" width="1" height="1" fill="#000"/><rect x="1" y="7" width="1" height="1" fill="#fff"/><rect x="2" y="7" width="1" height="1" fill="#fff"/><rect x="3" y="7" width="1" height="1" fill="#fff"/><rect x="4" y="7" width="1" height="1" fill="#000"/><rect x="5" y="7" width="1" height="1" fill="#000"/><rect x="6" y="7" width="1" height="1" fill="#fff"/><rect x="7" y="7" width="1" height="1" fill="#fff"/><rect x="8" y="7" width="1" height="1" fill="#fff"/><rect x="9" y="7" width="1" height="1" fill="#000"/><rect x="0" y="8" width="1" height="1" fill="#000"/><rect x="1" y="8" width="1" height="1" fill="#fff"/><rect x="2" y="8" width="1" height="1" fill="#fff"/><rect x="3" y="8" width="1" height="1" fill="#000"/><rect x="6" y="8" width="1" height="1" fill="#000"/><rect x="7" y="8" width="1" height="1" fill="#fff"/><rect x="8" y="8" width="1" height="1" fill="#fff"/><rect x="9" y="8" width="1" height="1" fill="#000"/><rect x="0" y="9" width="1" height="1" fill="#000"/><rect x="1" y="9" width="1" height="1" fill="#000"/><rect x="2" y="9" width="1" height="1" fill="#000"/><rect x="7" y="9" width="1" height="1" fill="#000"/><rect x="8" y="9" width="1" height="1" fill="#000"/><rect x="9" y="9" width="1" height="1" fill="#000"/></g></svg>
<span id="prob" class="t" style="left:336px;top:421px;font-size:11px;color:#000;letter-spacing:0.237px;font-family:'Liberation Sans', sans-serif;font-weight:normal;font-style:normal;">Problems</span>
<span id="jd" class="t" style="left:413px;top:421px;font-size:11px;color:#000;letter-spacing:-0.053px;font-family:'Liberation Sans', sans-serif;font-weight:normal;font-style:normal;">Javadoc</span>
<span id="decl" class="t" style="left:483px;top:421px;font-size:11px;color:#000;letter-spacing:0.4px;font-family:'Liberation Sans', sans-serif;font-weight:normal;font-style:normal;">Declaration</span>
<span id="cons" class="t" style="left:572px;top:421px;font-size:11px;color:#000;letter-spacing:0.196px;font-family:'Liberation Sans', sans-serif;font-weight:normal;font-style:normal;">Console</span>
<div class="b" style="left:874px;top:419px;width:10px;height:4px;box-sizing:border-box;border:1px solid #000;background:#fff"></div>
<div class="b" style="left:892px;top:419px;width:10px;height:10px;box-sizing:border-box;border:1px solid #000;background:#fff"></div>
<div class="b" style="left:894px;top:421px;width:6px;height:1px;background:#000"></div>
<span id="term" class="t" style="left:318px;top:441px;font-size:11px;color:#000;letter-spacing:0.635px;font-family:'Liberation Sans', sans-serif;font-weight:normal;font-style:normal;">&lt;terminated&gt; ApplicationTest [JUnit] /System/Library/Frameworks/JavaVM.framework/Versions/1.6.0/Home/</span>
<div class="b" style="left:313px;top:478px;width:578px;height:1px;background:#9c9c9c"></div>
<div class="b" style="left:313px;top:479px;width:578px;height:89px;background:#fff"></div>
<span class="t" style="left:317px;top:480px;font-size:12px;color:#000;letter-spacing:-0.2px;font-family:'Liberation Mono', monospace;font-weight:normal;font-style:normal;white-space:pre">15:28:07,941 INFO  ~ Starting /Volumes/Data/Users-guillaume/Desktop/scrapbook/some</span>
<span class="t" style="left:317px;top:495px;font-size:12px;color:#000;letter-spacing:-0.2px;font-family:'Liberation Mono', monospace;font-weight:normal;font-style:normal;white-space:pre">15:28:08,679 WARN  ~ You&#39;re running Play! in DEV mode</span>
<span class="t" style="left:317px;top:510px;font-size:12px;color:#000;letter-spacing:-0.2px;font-family:'Liberation Mono', monospace;font-weight:normal;font-style:normal;white-space:pre">15:28:09,582 INFO  ~ Connected to jdbc:h2:mem:play;MODE=MYSQL;DB_CLOSE_ON_EXIT=FAL</span>
<span class="t" style="left:317px;top:525px;font-size:12px;color:#000;letter-spacing:-0.2px;font-family:'Liberation Mono', monospace;font-weight:normal;font-style:normal;white-space:pre">15:28:09,694 INFO  ~ Application &#39;someTests&#39; is now started !</span>
<div class="b" style="left:891px;top:479px;width:15px;height:88px;background:linear-gradient(90deg,#d9d9d9,#f7f7f7 40%,#fbfbfb 60%,#ececec)"></div>
<div class="b" style="left:314px;top:567px;width:577px;height:15px;background:linear-gradient(#9a9a9a 0 1px,#e0e0e0 1px,#f4f4f4 45%,#fafafa 60%,#ececec)"></div>
<svg class="b" style="left:314px;top:567px" width="577" height="15" viewBox="0 0 577 15"><defs><linearGradient id="th" x1="0" y1="0" x2="0" y2="1"><stop offset="0" stop-color="#fdfdfd"/><stop offset="0.35" stop-color="#f4f4f4"/><stop offset="0.55" stop-color="#e6e6e6"/><stop offset="1" stop-color="#fbfbfb"/></linearGradient><linearGradient id="ar" x1="0" y1="0" x2="0" y2="1"><stop offset="0" stop-color="#e4e4e4"/><stop offset="0.5" stop-color="#f8f8f8"/><stop offset="1" stop-color="#eeeeee"/></linearGradient></defs><rect x="7.5" y="1.5" width="493" height="12" rx="6" fill="url(#th)" stroke="#6e6e6e" stroke-width="1"/><path d="M538,1 Q546,1 546,7.5 Q546,14 538,14 L577,14 L577,1Z" fill="url(#ar)"/><path d="M538,1.5 Q545.5,2 545.5,7.5 Q545.5,13 538,13.5" fill="none" stroke="#8a8a8a" stroke-width="0.9"/><path d="M549,7.5L555,4.5V10.5Z" fill="#8a8a8a"/><path d="M560.5,2V14" stroke="#d0d0d0"/><path d="M566,4.5L572,7.5L566,10.5Z" fill="#8a8a8a"/></svg>
<div class="b" style="left:891px;top:567px;width:15px;height:15px;background:#e8e8e8"></div>
<div class="b" style="left:313px;top:582px;width:595px;height:1px;background:#f4f4f4"></div>
<svg class="b" style="left:11px;top:59px" width="12" height="15" viewBox="0 0 12 15"><g shape-rendering="crispEdges"><rect x="1" y="1" width="1" height="13" fill="#5a6a8a"/><rect x="2" y="4" width="3" height="1" fill="#5a6a8a"/><rect x="2" y="10" width="3" height="1" fill="#5a6a8a"/><rect x="5" y="2" width="5" height="5" fill="#c4701e"/><rect x="5" y="8" width="5" height="5" fill="#c4701e"/><rect x="6" y="3" width="1" height="1" fill="#fbe2b0"/><rect x="8" y="3" width="1" height="1" fill="#fbe2b0"/><rect x="6" y="5" width="1" height="1" fill="#fbe2b0"/><rect x="8" y="5" width="1" height="1" fill="#fbe2b0"/><rect x="6" y="9" width="1" height="1" fill="#fbe2b0"/><rect x="8" y="9" width="1" height="1" fill="#fbe2b0"/><rect x="6" y="11" width="1" height="1" fill="#fbe2b0"/><rect x="8" y="11" width="1" height="1" fill="#fbe2b0"/></g></svg>
<svg class="b" style="left:127px;top:61px" width="18" height="15" viewBox="0 0 18 15"><path d="M5,1.8H12" stroke="#2a7a4a" stroke-width="1.5"/><path d="M8.5,1.8V9" stroke="#2a7a4a" stroke-width="1.8"/><path d="M12,4.5V9Q12,11 14.3,11Q16.8,11 16.8,9V4.5" fill="none" stroke="#d83848" stroke-width="1.5"/><path d="M11,4.3H13.2M15.8,4.3H18" stroke="#d83848" stroke-width="0.9"/><rect x="1" y="6" width="7" height="8" fill="#159a3a"/><path d="M2.5,10L4,12L6.5,7.5" fill="none" stroke="#fff" stroke-width="1.3"/></svg>
<svg class="b" style="left:318px;top:59px" width="13" height="16" viewBox="0 0 13 16"><path d="M1.5,1.5H9L11.5,4V14.5H1.5Z" fill="#f4f8ff" stroke="#a88030" stroke-width="1"/><path d="M9,1.5V4H11.5" fill="#e0c070" stroke="#a88030" stroke-width="0.8"/><path d="M8,4.5V11Q8,13 5.8,13Q4,13 4,11.5" fill="none" stroke="#2a62a8" stroke-width="1.8"/></svg>
<svg class="b" style="left:317px;top:418px" width="15" height="15" viewBox="0 0 15 15"><rect x="0.5" y="0.5" width="10" height="14" fill="#e8f8fc" stroke="#8a96b8"/><path d="M0.5,7.5H12M8.5,0.5V14.5" stroke="#a8b4cc"/><path d="M0.5,14.5V0.5H8" fill="none" stroke="#9a8a5a"/><path d="M10.5,1.5Q12.5,2 12.5,4V12Q12.5,14 10.5,14.5" fill="none" stroke="#8aa0d0"/><circle cx="5" cy="4.3" r="2.5" fill="#e03848"/><path d="M2.5,13.5L5,9L7.5,13.5Z" fill="#f0a020"/></svg>
<svg class="b" style="left:396px;top:420px" width="12" height="12" viewBox="0 0 12 12"><circle cx="6" cy="6" r="4.9" fill="none" stroke="#2a6ab0" stroke-width="1.2"/><path d="M8,3.5L7,8.5Q7.5,9.8 9,8.6" fill="none" stroke="#1a5aa0" stroke-width="1.1"/><ellipse cx="5.8" cy="6" rx="1.8" ry="2.4" transform="rotate(15 5.8 6)" fill="none" stroke="#1a5aa0" stroke-width="1.2"/><path d="M9,10Q11,9.5 11,7" fill="none" stroke="#fff" stroke-width="1"/></svg>
<svg class="b" style="left:463px;top:417px" width="17" height="17" viewBox="0 0 17 17"><path d="M1.5,1.5H9L12.5,5V14.5H1.5Z" fill="#f2f6ff" stroke="#b08a30" stroke-width="1"/><path d="M9,1.5V5H12.5" fill="#e8c878" stroke="#b08a30" stroke-width="0.8"/><path d="M6,3.5Q4.5,3.5 4.5,5V7Q4.5,8 3.5,8Q4.5,8 4.5,9V11Q4.5,12.5 6,12.5" fill="none" stroke="#2a62a8" stroke-width="1.1"/><path d="M7,7.5H10M7,9.5H10" stroke="#2a62a8" stroke-width="1.1"/><path d="M7.5,11.5H11.5V9L15.5,12.5L11.5,16V13.8H7.5Z" fill="#fbe070" stroke="#c88a10" stroke-width="1"/></svg>
<svg class="b" style="left:553px;top:418px" width="15" height="15" viewBox="0 0 15 15"><rect x="1" y="1" width="13" height="10" rx="1" fill="#2a62b8"/><rect x="3" y="3" width="9" height="6" fill="#e6f6fe"/><path d="M4,4.5H8M4,6.5H10" stroke="#1a3a80" stroke-width="1"/><rect x="6" y="11" width="3" height="2" fill="#2a62b8"/><rect x="3" y="13" width="9" height="1.5" rx="0.5" fill="#2a62b8"/></svg>
<svg class="b" style="left:121px;top:107px" width="13" height="16" viewBox="0 0 13 16"><path d="M4,1.5H9V7.5H11.8L6.5,14L1.2,7.5H4Z" fill="#e6e6de" stroke="#cacac2" stroke-width="1"/></svg>
<svg class="b" style="left:142px;top:107px" width="14" height="16" viewBox="0 0 14 16"><path d="M4.5,14.5H9.5V8.5H12.3L7,2L1.7,8.5H4.5Z" fill="#e6e6de" stroke="#cacac2" stroke-width="1"/></svg>
<svg class="b" style="left:163px;top:106px" width="17" height="17" viewBox="0 0 17 17"><rect x="9" y="1" width="7" height="8" fill="#d8243c"/><path d="M10.8,3L14.2,7M14.2,3L10.8,7" stroke="#fff" stroke-width="1.2"/><rect x="1" y="8" width="7" height="8" fill="#1a3a7a"/><path d="M2.8,10L6.2,14M6.2,10L2.8,14" stroke="#fff" stroke-width="1"/></svg>
<svg class="b" style="left:186px;top:107px" width="16" height="16" viewBox="0 0 16 16"><rect x="1.5" y="0.5" width="14" height="14" fill="#dce8f8" stroke="#b09050"/><rect x="2" y="1" width="7" height="13" fill="#eef4fc"/><path d="M10.5,1V15" stroke="#90a0c0"/><rect x="12" y="3" width="2" height="2" fill="#5a78b8"/><rect x="12" y="7" width="2" height="2" fill="#9aaad0"/><rect x="12" y="11" width="2" height="2" fill="#5a78b8"/><path d="M3,10V8.5Q3,6 5,6Q7,6 7,8.5V10" fill="none" stroke="#a88020" stroke-width="1.3"/><rect x="0.5" y="9.5" width="9" height="6" rx="1" fill="#f0d060" stroke="#a88020"/><rect x="4.5" y="11.5" width="1" height="2" fill="#805a10"/></svg>
<div class="b" style="left:207px;top:104px;width:1px;height:22px;background:#8e8e8e"></div>
<svg class="b" style="left:212px;top:106px" width="18" height="18" viewBox="0 0 18 18"><defs><radialGradient id="rr" cx="45%" cy="40%" r="60%"><stop offset="0" stop-color="#60c068"/><stop offset="1" stop-color="#1c7a2c"/></radialGradient></defs><circle cx="6.5" cy="6" r="5.6" fill="url(#rr)" stroke="#2a8a3a" stroke-width="0.6"/><path d="M4.5,3L9,6L4.5,9Z" fill="#fff"/><path d="M9,11.5Q9,9 11,9H13V7.5L16.5,11L13,14.5V13H11.5Q10,13 9,11.5Z" fill="#f8d860" stroke="#c08010" stroke-width="0.9"/><path d="M8.5,12Q10,15 12,15" fill="none" stroke="#c08010" stroke-width="0.9"/></svg>
<svg class="b" style="left:234px;top:106px" width="18" height="18" viewBox="0 0 18 18"><rect x="1" y="1" width="9" height="14" fill="#e4e4e4" stroke="#d4d4d4"/><circle cx="6" cy="5.5" r="3.6" fill="#d6d6d6"/><rect x="1" y="9" width="7" height="7" fill="#e0d8d8"/><path d="M3,11L6,14M6,11L3,14" stroke="#fff"/><path d="M9,12H12V10L16,13L12,16V14H9Z" fill="#ececec" stroke="#d4d4d4"/></svg>
<svg class="b" style="left:260px;top:110px" width="11" height="11" viewBox="0 0 11 11"><rect x="0.5" y="0.5" width="10" height="10" fill="#e2d6d8" stroke="#d8d8d8"/></svg>
<svg class="b" style="left:280px;top:107px" width="14" height="16" viewBox="0 0 14 16"><path d="M1.5,0.5H12.5V13L10,15.5L7.5,13.5L5,15.5L1.5,13.5Z" fill="#f6faff" stroke="#b09050"/><circle cx="4" cy="3.5" r="1.3" fill="#30a040"/><circle cx="4" cy="7" r="1.3" fill="#30a040"/><circle cx="4" cy="10.5" r="1.3" fill="#30a040"/><path d="M6.5,3.5H11M6.5,7H11M6.5,10.5H11" stroke="#3a5aa0"/></svg>
<svg class="b" style="left:298px;top:114px" width="5" height="4" viewBox="0 0 5 4"><path d="M0,0H5L2.5,4Z" fill="#000"/></svg>
<div class="b" style="left:12px;top:392px;width:12px;height:2px;background:#1e5ea8"></div>
<div class="b" style="left:12px;top:396px;width:12px;height:2px;background:#1e5ea8"></div>
<div class="b" style="left:12px;top:400px;width:12px;height:2px;background:#1e5ea8"></div>
<div class="b" style="left:262px;top:387px;width:22px;height:22px;box-sizing:border-box;border:1px solid #a6a6a6;background:#d6d6d6"></div>
<svg class="b" style="left:265px;top:390px" width="17" height="16" viewBox="0 0 17 16"><path d="M1,3.5H7" stroke="#3a8ad0" stroke-width="1.2"/><path d="M5,1.5L8,3.5L5,5.5Z" fill="#505a60"/><path d="M9,1V6" stroke="#505a60"/><path d="M8,7.5H15M8,9.5H15M8,11.5H15" stroke="#1a5aa8" stroke-width="1.2"/><path d="M1,13.5H7" stroke="#3a8ad0" stroke-width="1.2"/><path d="M5,11.5L8,13.5L5,15.5Z" fill="#505a60"/><path d="M9,12V16" stroke="#505a60"/></svg>
<svg class="b" style="left:288px;top:391px" width="15" height="15" viewBox="0 0 15 15"><rect x="8.5" y="0.5" width="6" height="6" fill="#f4f4f4" stroke="#d6d6d6"/><rect x="0.5" y="8.5" width="7" height="6" fill="#f4f4f4" stroke="#d6d6d6"/><path d="M1.5,7V3.5H6" fill="none" stroke="#d0d0d0"/></svg>
<svg class="b" style="left:15px;top:197px" width="9" height="8" viewBox="0 0 9 8"><path d="M0,0H9L4.5,7.5Z" fill="#8c8c8c"/></svg>
<svg class="b" style="left:26px;top:192px" width="17" height="17" viewBox="0 0 17 17"><rect x="1.5" y="1.5" width="8" height="9" fill="#f6f8fc" stroke="#b08a38"/><path d="M4,3V6H6" fill="none" stroke="#3aa050"/><rect x="7.5" y="5.5" width="8" height="10" fill="#f6f8fc" stroke="#b08a38"/><path d="M10,7V12H12M10,9.5H12" fill="none" stroke="#3aa050"/><rect x="13" y="9" width="1" height="1" fill="#3aa050"/><rect x="13" y="12" width="1" height="1" fill="#3aa050"/><rect x="1" y="8" width="7" height="8" fill="#16a040"/><path d="M2.5,12L4,14L6.5,9.5" fill="none" stroke="#fff" stroke-width="1.2"/></svg>
<svg class="b" style="left:43px;top:209px" width="16" height="17" viewBox="0 0 16 17"><rect x="3.5" y="1.5" width="11" height="13" fill="#f6f8fc" stroke="#b08a38"/><path d="M6,3V12M6,6H10M6,9H10M6,12H10" fill="none" stroke="#3aa050"/><rect x="11.5" y="5.5" width="1" height="1" fill="#3aa050"/><rect x="11.5" y="8.5" width="1" height="1" fill="#3aa050"/><rect x="11.5" y="11.5" width="1" height="1" fill="#3aa050"/><rect x="0" y="8" width="7" height="8" fill="#16a040"/><path d="M1.5,12L3,14L5.5,9.5" fill="none" stroke="#fff" stroke-width="1.2"/></svg>
<svg class="b" style="left:110px;top:141px" width="8" height="9" viewBox="0 0 8 9"><rect x="0" y="0" width="7" height="8" fill="#d8243c"/><path d="M1.8,2L5.2,6M5.2,2L1.8,6" stroke="#fff" stroke-width="1.2"/></svg>
<svg class="b" style="left:203px;top:141px" width="8" height="9" viewBox="0 0 8 9"><rect x="0" y="0" width="7" height="8" fill="#1a3a7a"/><path d="M1.8,2L5.2,6M5.2,2L1.8,6" stroke="#fff" stroke-width="1"/></svg>
<svg class="b" style="left:664px;top:461px" width="11" height="11" viewBox="0 0 11 11"><rect x="0.5" y="0.5" width="10" height="10" fill="#e2d6d8" stroke="#d8d8d8"/></svg>
<svg class="b" style="left:684px;top:461px" width="14" height="12" viewBox="0 0 14 12"><path d="M2,1.5L12,10.5M12,1.5L2,10.5" stroke="#7c7c7c" stroke-width="3.2"/><path d="M3,2L7,5.5" stroke="#b8b8b8" stroke-width="0.8"/></svg>
<svg class="b" style="left:705px;top:459px" width="17" height="15" viewBox="0 0 17 15"><path d="M2,2L9,9M9,2L2,9" stroke="#a0a0a0" stroke-width="2.6"/><path d="M6,5L15,13.5M15,5L6,13.5" stroke="#7c7c7c" stroke-width="3.2"/></svg>
<div class="b" style="left:727px;top:455px;width:1px;height:22px;background:#8e8e8e"></div>
<svg class="b" style="left:734px;top:459px" width="16" height="15" viewBox="0 0 16 15"><path d="M0.5,0.5H7L9.5,3V13.5H0.5Z" fill="#f2f6ff" stroke="#b09050"/><path d="M2,3.5H7M2,5.5H7M2,7.5H6" stroke="#3a5aa0"/><path d="M8,8L14,14M14,8L8,14" stroke="#3a3a3a" stroke-width="2.2"/></svg>
<svg class="b" style="left:755px;top:459px" width="16" height="16" viewBox="0 0 16 16"><rect x="1.5" y="0.5" width="14" height="14" fill="#dce8f8" stroke="#b09050"/><rect x="2" y="1" width="7" height="13" fill="#eef4fc"/><path d="M10.5,1V15" stroke="#90a0c0"/><rect x="12" y="3" width="2" height="2" fill="#5a78b8"/><rect x="12" y="7" width="2" height="2" fill="#9aaad0"/><rect x="12" y="11" width="2" height="2" fill="#5a78b8"/><path d="M3,10V8.5Q3,6 5,6Q7,6 7,8.5V10" fill="none" stroke="#a88020" stroke-width="1.3"/><rect x="0.5" y="9.5" width="9" height="6" rx="1" fill="#f0d060" stroke="#a88020"/><rect x="4.5" y="11.5" width="1" height="2" fill="#805a10"/></svg>
<div class="b" style="left:774px;top:455px;width:22px;height:22px;box-sizing:border-box;border:1px solid #a6a6a6;background:#d6d6d6"></div>
<div class="b" style="left:796px;top:455px;width:22px;height:22px;box-sizing:border-box;border:1px solid #a6a6a6;background:#d6d6d6"></div>
<svg class="b" style="left:777px;top:459px" width="16" height="15" viewBox="0 0 16 15"><rect x="4.5" y="0.5" width="11" height="8" rx="1" fill="#eef6fe" stroke="#3a72c0"/><path d="M7,3H13M7,5.5H12" stroke="#2a5aa8"/><rect x="0.5" y="6.5" width="8" height="6" fill="#cfe2f8" stroke="#3a72c0"/><path d="M3,13.5H7" stroke="#3a72c0" stroke-width="1.5"/></svg>
<svg class="b" style="left:799px;top:459px" width="16" height="15" viewBox="0 0 16 15"><rect x="4.5" y="0.5" width="11" height="8" rx="1" fill="#eef6fe" stroke="#3a72c0"/><path d="M6.5,2L9.5,6.5M9.5,2L6.5,6.5" stroke="#e02030" stroke-width="1.3"/><path d="M11,3H14M11,5.5H14" stroke="#2a5aa8"/><rect x="0.5" y="6.5" width="8" height="6" fill="#cfe2f8" stroke="#3a72c0"/><path d="M3,13.5H7" stroke="#3a72c0" stroke-width="1.5"/></svg>
<div class="b" style="left:821px;top:455px;width:1px;height:22px;background:#8e8e8e"></div>
<svg class="b" style="left:828px;top:459px" width="16" height="15" viewBox="0 0 16 15"><rect x="0.5" y="4.5" width="12" height="9" fill="#f4faff" stroke="#8a7a5a"/><rect x="1" y="5" width="11" height="2" fill="#4a80c0"/><path d="M6,11L12,4" stroke="#2a5a3a" stroke-width="1"/><path d="M9,5L13,1Q15,0.5 15.5,2L12,6Z" fill="#40a040" stroke="#2a6a2a" stroke-width="0.7"/></svg>
<svg class="b" style="left:850px;top:459px" width="15" height="14" viewBox="0 0 15 14"><rect x="0.5" y="0.5" width="13" height="9" rx="1" fill="#e0ecf8" stroke="#8aaad8"/><path d="M3,3.5H9M3,6H10" stroke="#8aa0c8"/><path d="M5.5,10V12M3,12.5H11" stroke="#8aaad8" stroke-width="1.2"/></svg>
<svg class="b" style="left:868px;top:465px" width="5" height="4" viewBox="0 0 5 4"><path d="M0,0H5L2.5,4Z" fill="#8a8a8a"/></svg>
<svg class="b" style="left:879px;top:459px" width="17" height="15" viewBox="0 0 17 15"><rect x="0.5" y="3.5" width="12" height="10" fill="#eaf6fc" stroke="#8a7a5a"/><rect x="1" y="4" width="11" height="2" fill="#4a80c0"/><path d="M12,7Q12,12 6,13.5" fill="none" stroke="#f8d860" stroke-width="1.1"/><path d="M12,0.2999999999999998 Q13.024000000000001,2.476 15.2,3.5 Q13.024000000000001,4.524 12,6.7 Q10.975999999999999,4.524 8.8,3.5 Q10.975999999999999,2.476 12,0.2999999999999998Z" fill="#b88a08" stroke="#9a7000" stroke-width="0.7"/><path d="M12,1.2999999999999998V5.7M9.8,3.5H14.2" stroke="#fff8c8" stroke-width="0.9"/></svg>
<svg class="b" style="left:898px;top:465px" width="5" height="4" viewBox="0 0 5 4"><path d="M0,0H5L2.5,4Z" fill="#000"/></svg>
<svg class="b" style="left:6px;top:589px" width="3" height="18" viewBox="0 0 3 18"><rect x="0" y="0.5" width="2" height="17" fill="#fcfcfc"/><path d="M2.5,0V18M0,0.5H2.5M0,17.5H2.5" stroke="#8a8a8a"/></svg>
<svg class="b" style="left:626px;top:589px" width="3" height="18" viewBox="0 0 3 18"><rect x="0" y="0.5" width="2" height="17" fill="#fcfcfc"/><path d="M2.5,0V18M0,0.5H2.5M0,17.5H2.5" stroke="#8a8a8a"/></svg>
<svg class="b" style="left:17px;top:590px" width="16" height="16" viewBox="0 0 16 16"><rect x="0.5" y="2.5" width="6" height="12" fill="#e8f6fc" stroke="#a09060"/><rect x="0" y="2" width="7" height="3" fill="#3a78c0"/><path d="M10.5,1.2999999999999998 Q11.524000000000001,3.476 13.7,4.5 Q11.524000000000001,5.524 10.5,7.7 Q9.475999999999999,5.524 7.3,4.5 Q9.475999999999999,3.476 10.5,1.2999999999999998Z" fill="#b88a08" stroke="#9a7000" stroke-width="0.7"/><path d="M10.5,2.3V6.7M8.3,4.5H12.7" stroke="#fff8c8" stroke-width="0.9"/></svg>
<svg class="b" style="left:899px;top:602px" width="14" height="13" viewBox="0 0 14 13"><path d="M1,12L12,1M5,12L12,5M9,12L12,9" stroke="#6a6a6a" stroke-width="1.2" stroke-dasharray="1.2 0.6"/></svg>
</body></html>
